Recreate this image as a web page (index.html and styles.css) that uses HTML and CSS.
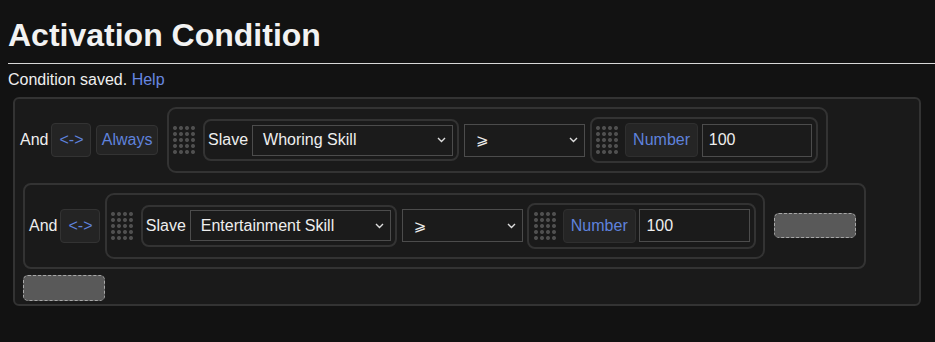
FILE: index.html
```html
<!DOCTYPE html>
<html lang="en">
<head>
<meta charset="utf-8">
<title>Activation Condition</title>
<link rel="stylesheet" href="styles.css">
</head>
<body>
<h1 class="title">Activation Condition</h1>
<p class="status">Condition saved. <a class="link" href="#">Help</a></p>
<div class="cond-root">
  <div class="row row-top">
    <span class="op-label">And</span>
    <span class="btn btn-swap">&lt;-&gt;</span>
    <span class="btn btn-always">Always</span>
    <div class="group">
      <span class="grip"></span>
      <div class="field slave">
        <span class="field-label">Slave</span>
        <div class="select select-wide"><span class="select-text">Whoring Skill</span><svg class="chev" width="9" height="6" viewBox="0 0 9 6"><polyline points="1,1 4.5,4.5 8,1" fill="none" stroke="#ddd" stroke-width="1.4"/></svg></div>
      </div>
      <div class="select select-op"><span class="select-text op-glyph">⩾</span><svg class="chev" width="9" height="6" viewBox="0 0 9 6"><polyline points="1,1 4.5,4.5 8,1" fill="none" stroke="#ddd" stroke-width="1.4"/></svg></div>
      <div class="field number">
        <span class="grip"></span>
        <span class="btn btn-number">Number</span>
        <div class="input">100</div>
      </div>
    </div>
  </div>
  <div class="row row-box">
    <span class="op-label">And</span>
    <span class="btn btn-swap">&lt;-&gt;</span>
    <div class="group">
      <span class="grip"></span>
      <div class="field slave">
        <span class="field-label">Slave</span>
        <div class="select select-wide"><span class="select-text">Entertainment Skill</span><svg class="chev" width="9" height="6" viewBox="0 0 9 6"><polyline points="1,1 4.5,4.5 8,1" fill="none" stroke="#ddd" stroke-width="1.4"/></svg></div>
      </div>
      <div class="select select-op"><span class="select-text op-glyph">⩾</span><svg class="chev" width="9" height="6" viewBox="0 0 9 6"><polyline points="1,1 4.5,4.5 8,1" fill="none" stroke="#ddd" stroke-width="1.4"/></svg></div>
      <div class="field number">
        <span class="grip"></span>
        <span class="btn btn-number">Number</span>
        <div class="input">100</div>
      </div>
    </div>
    <div class="drop drop-inline"></div>
  </div>
  <div class="drop drop-bottom"></div>
</div>
</body>
</html>
```
FILE: styles.css
```css
* { box-sizing: border-box; }

html, body {
  background: #121212;
}

body {
  margin: 0;
  font-family: "Liberation Sans", Arial, sans-serif;
  font-size: 16px;
  color: #eeeeee;
}

.title {
  margin: 0 0 0 8px;
  padding: 17px 0 9px;
  font-size: 32px;
  font-weight: bold;
  color: #f2f2f2;
  border-bottom: 1px solid #d8d8d8;
}

.status {
  margin: 7px 0 0 8px;
  color: #eeeeee;
}

.link {
  color: #6787e0;
  text-decoration: none;
}

.cond-root {
  margin: 8px 14px 0 13px;
  border: 2px solid #333333;
  border-radius: 6px;
  background: #1a1a1a;
  padding: 8px 8px 3px 5px;
  display: flex;
  flex-direction: column;
  align-items: flex-start;
}

.row {
  display: flex;
  align-items: center;
}

.op-label {
  margin-right: 3px;
  color: #eeeeee;
}

.btn {
  display: flex;
  align-items: center;
  justify-content: center;
  background: #242424;
  border: 1px solid #333333;
  border-radius: 4px;
  color: #5f82dc;
  font-size: 16px;
}

.btn-swap {
  width: 40px;
  height: 34px;
  margin-right: 4.3px;
}

.btn-always {
  width: 62.7px;
  height: 30px;
  margin-right: 8.6px;
}

.group {
  display: flex;
  align-items: center;
  border: 2px solid #333333;
  border-radius: 9px;
  padding: 8px 7.7px 8px 3px;
}

.grip {
  display: block;
  width: 24px;
  height: 30px;
  background-image: radial-gradient(circle at center, #505050 0, #505050 1.5px, rgba(80,80,80,0) 2.4px);
  background-size: 6px 6px;
}

.group > .grip {
  margin-right: 7px;
}

.field {
  display: flex;
  align-items: center;
  border: 2px solid #333333;
  border-radius: 8px;
}

.slave {
  height: 42px;
  padding: 0 4px 0 3px;
  margin-right: 5px;
}

.field-label {
  margin-right: 4px;
  color: #eeeeee;
}

.select {
  display: flex;
  align-items: center;
  justify-content: space-between;
  border: 1px solid #4c4c4c;
  background: #1b1b1b;
  padding: 0 6px 0 10px;
  color: #eeeeee;
}

.select-wide {
  width: 201px;
  height: 31px;
}

.select-op {
  width: 121px;
  height: 33px;
  margin-right: 4.6px;
  padding-left: 11px;
}

.op-glyph {
  font-family: "DejaVu Sans", sans-serif;
  font-size: 15px;
}

.chev {
  display: block;
}

.number {
  height: 46px;
  padding: 0 3.6px 0 3.7px;
}

.number > .grip {
  margin-right: 5.7px;
}

.btn-number {
  width: 73px;
  height: 34px;
  margin-right: 3.7px;
  background: #252525;
  border-color: #2f2f2f;
}

.input {
  width: 110.7px;
  height: 33px;
  border: 1px solid #4c4c4c;
  background: #1b1b1b;
  padding: 0 6px;
  display: flex;
  align-items: center;
  color: #eeeeee;
}

.row-box {
  margin: 9.5px 0 0 3px;
  border: 2px solid #333333;
  border-radius: 8px;
  padding: 8px 8px 8px 4px;
}

.row-box > .btn-swap {
  margin-right: 4.3px;
}

.drop {
  width: 82px;
  height: 25.5px;
  background: #595959;
  border: 1px dashed #a8a8a8;
  border-radius: 5px;
}

.drop-inline {
  margin-left: 8.3px;
}

.drop-bottom {
  margin: 6.7px 0 0 3px;
}
```
